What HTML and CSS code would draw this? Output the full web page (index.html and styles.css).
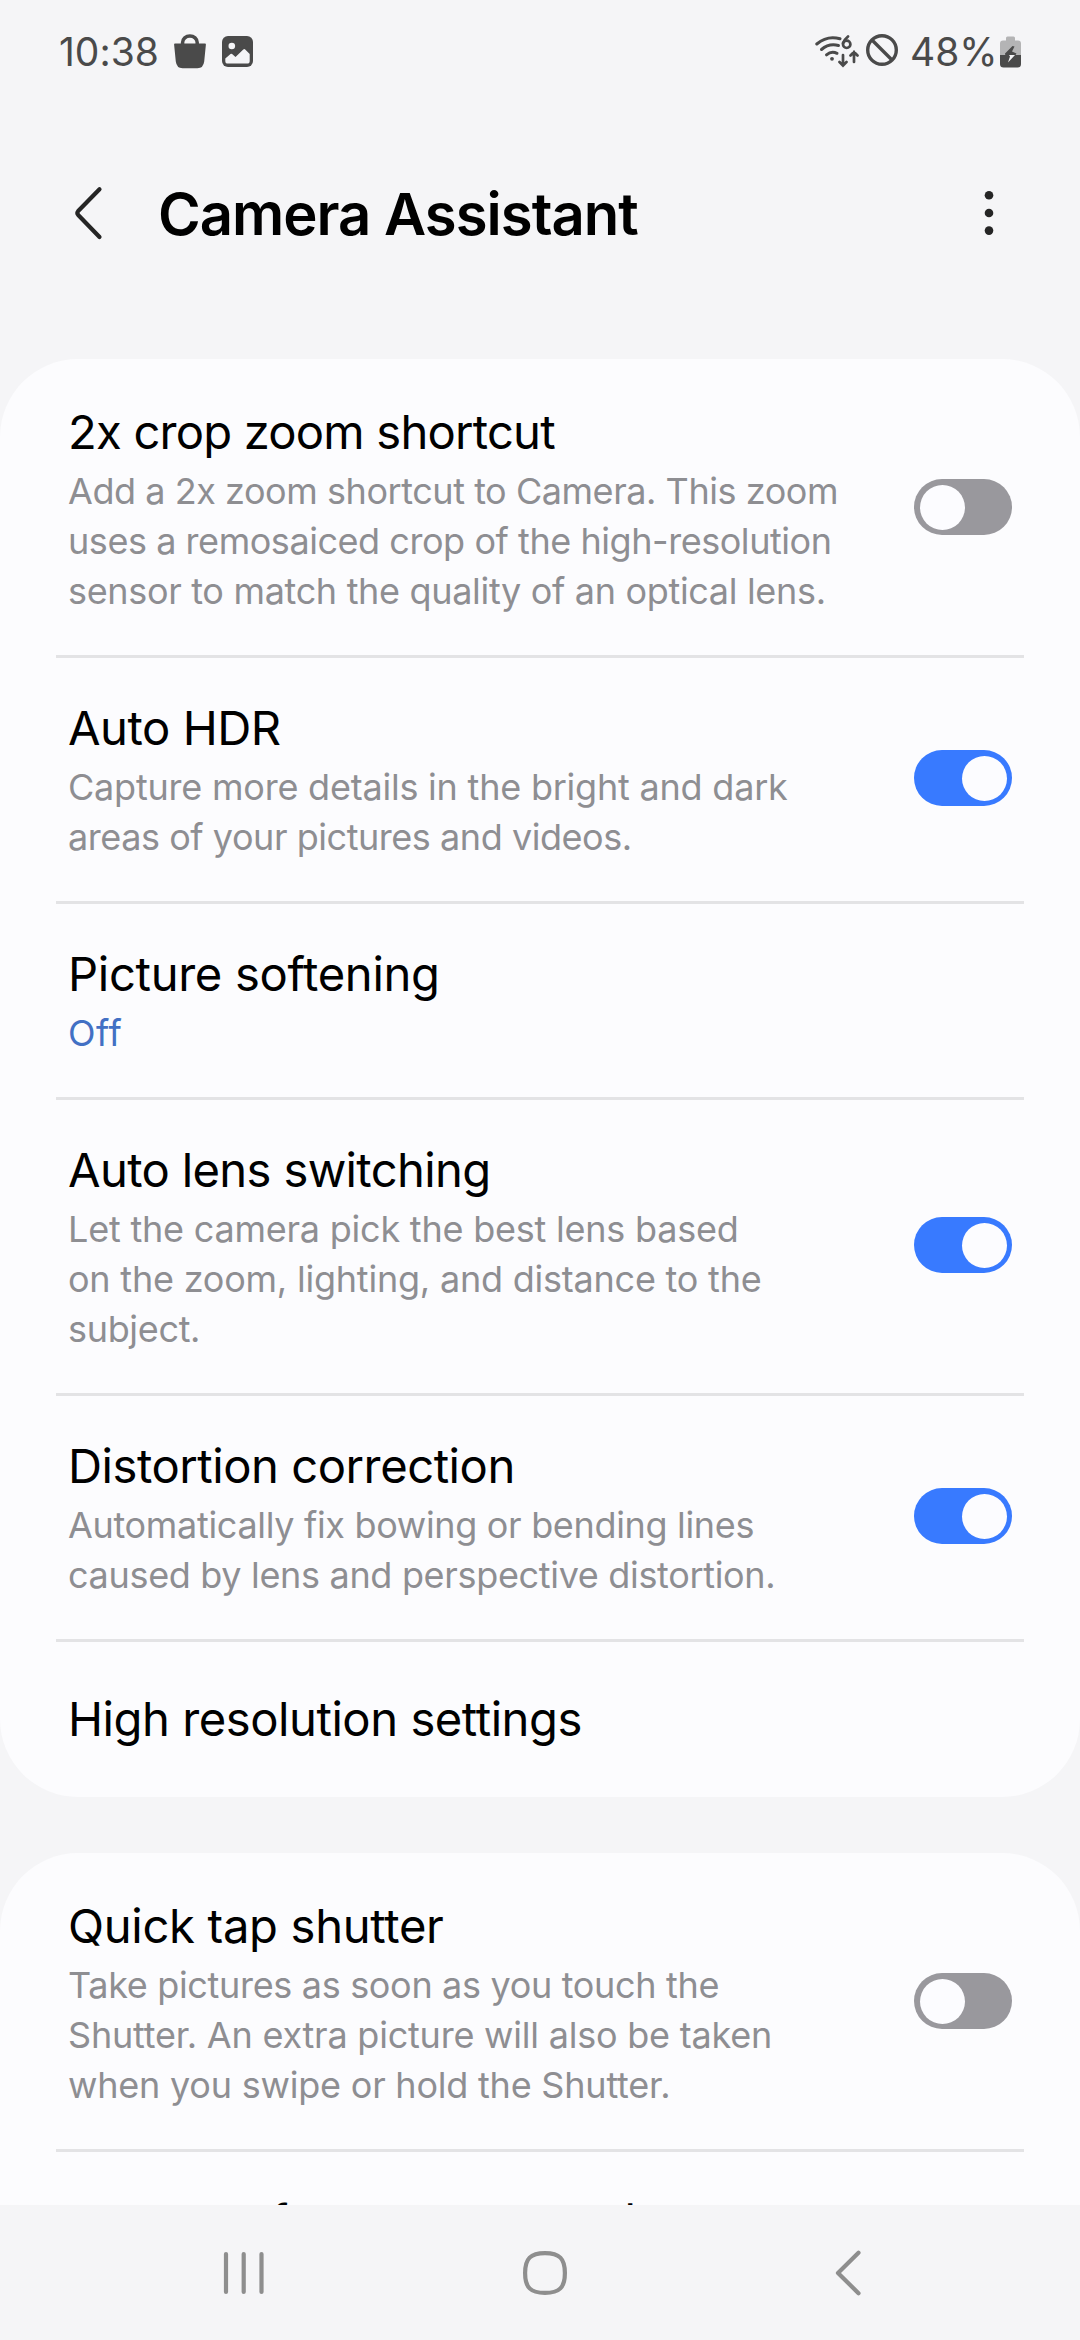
FILE: index.html
```html
<!DOCTYPE html>
<html lang="en">
<head>
<meta charset="utf-8">
<title>Camera Assistant</title>
<link rel="stylesheet" href="styles.css">
</head>
<body>
<div class="screen">
  <div class="status">
    <span class="status-text clock">10:38</span>
    <svg class="bag" width="34" height="36" viewBox="0 0 34 36">
      <path d="M2 9.500H32Q33 9.500 32.900 10.500L31.200 27.500Q30.300 34.300 24.500 34.300H9.500Q3.700 34.300 2.800 27.500L1.100 10.500Q1 9.500 2 9.500Z" fill="#4a4a4a"/>
      <path d="M9.600 11V8.500A7.300 6.600 0 0 1 24.200 8.500V11" fill="none" stroke="#4a4a4a" stroke-width="3.500"/>
    </svg>
    <svg class="gallery" width="31" height="31" viewBox="0 0 31 31">
      <rect width="31" height="31" rx="6" fill="#4a4a4a"/>
      <circle cx="9.800" cy="10" r="3.300" fill="#f5f5f7"/>
      <path d="M3.300 22.500L8.500 18Q9.300 17.400 10.100 18L13.500 21L21.300 13.400Q22.300 12.600 23.200 13.400L27.700 18V25Q27.700 27.600 25 27.600H6Q3.300 27.600 3.300 25Z" fill="#f5f5f7"/>
    </svg>
    <span class="spacer"></span>
    <svg class="wifi" width="44" height="34" viewBox="0 0 44 34" fill="none" stroke="#4a4a4a" stroke-linecap="round">
      <g stroke-width="3">
        <path d="M1.800 9Q12.500 0 25 3.800"/>
        <path d="M6.500 14.500Q14 8 23.500 10.500"/>
        <path d="M11.500 19.800Q16.500 15.500 22 18.300"/>
      </g>
      <circle cx="17" cy="23.800" r="1.900" fill="#4a4a4a" stroke="none"/>
      <path d="M33 1.500Q29.500 4.500 28 8" stroke-width="2.700"/>
      <circle cx="31.700" cy="9.300" r="3.700" stroke-width="2.700"/>
      <path d="M28 20V30M24.500 27L28 30.500L31.500 27M39 27V17M35.500 20.500L39 17L42.500 20.500" stroke-width="2.700"/>
    </svg>
    <svg class="ban" width="34" height="34" viewBox="0 0 34 34" fill="none" stroke="#4a4a4a" stroke-width="3.400">
      <circle cx="17" cy="17" r="14.300"/>
      <path d="M7 7L27 27"/>
    </svg>
    <span class="status-text percent">48%</span>
    <svg class="battery" width="21" height="32" viewBox="0 0 21 32">
      <path d="M6 4.500V2Q6 .5 7.500 .5H13.500Q15 .5 15 2V4.500H18Q21 4.500 21 7.500V19.500H0V7.500Q0 4.500 3 4.500Z" fill="#b4b4b5"/>
      <path d="M0 19H21V28Q21 31.500 17.500 31.500H3.500Q0 31.500 0 28Z" fill="#4a4a4a"/>
      <path d="M12.500 10L5 17.500Q4.700 19 6 19H15.500L16.500 17.500L12 15.500L14.500 10.500Z" fill="#4a4a4a"/>
      <path d="M9 19H15L8 26.500L10 20.500Z" fill="#f5f5f7"/>
    </svg>
  </div>

  <header class="header">
    <svg class="back" width="36" height="60" viewBox="0 0 36 60" fill="none" stroke="#252525" stroke-width="4.200" stroke-linecap="round" stroke-linejoin="round">
      <path d="M29.500 6.200L8.200 28Q6.500 30 8.200 32L29.500 54"/>
    </svg>
    <h1 class="heading">Camera Assistant</h1>
    <svg class="more" width="12" height="60" viewBox="0 0 12 60" fill="#252525">
      <circle cx="6" cy="12.300" r="4.300"/><circle cx="6" cy="30" r="4.300"/><circle cx="6" cy="47.600" r="4.300"/>
    </svg>
  </header>

  <main class="list">
    <section class="card">
      <div class="row">
        <div class="copy">
          <h2 class="title tight">2x crop zoom shortcut</h2>
          <p class="summary"><span class="snug">Add a 2x zoom shortcut to Camera. This zoom<br>uses a remosaiced crop of the high-resolution</span><br>sensor to match the quality of an optical lens.</p>
        </div>
        <span class="toggle"><span class="knob"></span></span>
      </div>
      <div class="row">
        <div class="copy">
          <h2 class="title">Auto HDR</h2>
          <p class="summary"><span class="loose">Capture more details in the bright and dark</span><br><span class="snug">areas of your pictures and videos.</span></p>
        </div>
        <span class="toggle on"><span class="knob"></span></span>
      </div>
      <div class="row">
        <div class="copy">
          <h2 class="title wide">Picture softening</h2>
          <p class="summary value">Off</p>
        </div>
      </div>
      <div class="row">
        <div class="copy">
          <h2 class="title narrow">Auto lens switching</h2>
          <p class="summary"><span class="loose">Let the camera pick the best lens based<br>on the zoom, lighting, and distance to the</span><br>subject.</p>
        </div>
        <span class="toggle on"><span class="knob"></span></span>
      </div>
      <div class="row">
        <div class="copy">
          <h2 class="title">Distortion correction</h2>
          <p class="summary">Automatically fix bowing or bending lines<br>caused by lens and perspective distortion.</p>
        </div>
        <span class="toggle on"><span class="knob"></span></span>
      </div>
      <div class="row single">
        <h2 class="title">High resolution settings</h2>
      </div>
    </section>

    <section class="card">
      <div class="row">
        <div class="copy">
          <h2 class="title wide">Quick tap shutter</h2>
          <p class="summary">Take pictures as soon as you touch the<br><span class="loose">Shutter. An extra picture will also be taken<br>when you swipe or hold the Shutter.</span></p>
        </div>
        <span class="toggle"><span class="knob"></span></span>
      </div>
      <div class="row">
        <h2 class="title peek">Prioritize focus over speed</h2>
      </div>
    </section>
  </main>

  <nav class="nav">
    <svg width="48" height="48" viewBox="0 0 48 48" fill="none" stroke="#8e8e8e" stroke-width="4.200" stroke-linecap="round">
      <path d="M6 5V43M23.700 5V43M41.500 5V43"/>
    </svg>
    <svg width="48" height="48" viewBox="0 0 48 48" fill="none" stroke="#8e8e8e" stroke-width="4.200">
      <path d="M24 4.100C38.500 4.100 43.900 9.500 43.900 24S38.500 43.900 24 43.900S4.100 38.500 4.100 24S9.500 4.100 24 4.100Z"/>
    </svg>
    <svg width="48" height="48" viewBox="0 0 48 48" fill="none" stroke="#8e8e8e" stroke-width="4.200" stroke-linecap="round" stroke-linejoin="round">
      <path d="M35.500 3.800L15 24L35.500 44.200"/>
    </svg>
  </nav>
</div>
</body>
</html>
```
FILE: styles.css
```css
* {
  box-sizing: border-box;
  margin: 0;
  padding: 0;
}

body {
  background: #f5f5f7;
  font-family: Inter, "Liberation Sans", sans-serif;
  font-variant-ligatures: no-contextual;
}

svg {
  display: block;
  flex: none;
}

.screen {
  width: 1080px;
  height: 2340px;
  display: flex;
  flex-direction: column;
  overflow: hidden;
}

.status {
  flex: none;
  height: 103px;
  padding: 0 59px 0 59px;
  display: flex;
  align-items: center;
}

.status-text {
  color: #4a4a4a;
  font-size: 39px;
  font-weight: 370;
  line-height: 48px;
  white-space: nowrap;
}

.clock {
  width: 114px;
}

.gallery {
  margin-left: 15px;
}

.spacer {
  flex: 1;
}

.wifi {
  margin-right: 6px;
}

.ban {
  margin-right: 11px;
  margin-bottom: 4px;
}

.percent {
  width: 90px;
}

.header {
  flex: none;
  height: 256px;
  padding: 0 85px 36px 70px;
  display: flex;
  align-items: center;
}

.heading {
  flex: 1;
  padding-left: 52px;
  padding-top: 1px;
  font-size: 58px;
  font-weight: 600;
  line-height: 70px;
  letter-spacing: -0.017em;
  color: #000;
}

.list {
  flex: 1;
  min-height: 0;
  overflow: hidden;
  display: flex;
  flex-direction: column;
  gap: 56px;
}

.card {
  flex: none;
  padding: 0 56px;
  border-radius: 78px;
  background: #fcfcfe;
}

.row {
  display: flex;
  align-items: center;
  justify-content: space-between;
  padding: 43px 12px 39px;
}

.row + .row {
  box-shadow: inset 0 3px 0 #e3e3e5;
}

.row.single {
  padding: 50px 12px 48px;
}

.title {
  font-size: 47.2px;
  font-weight: 400;
  line-height: 60px;
  letter-spacing: -0.01em;
  color: #000;
  white-space: nowrap;
}

.title.tight {
  letter-spacing: -0.017em;
}

.title.narrow {
  letter-spacing: -0.014em;
}

.title.wide {
  letter-spacing: -0.007em;
}

.title.peek {
  font-family: Roboto, Inter, sans-serif;
  font-size: 46.8px;
  letter-spacing: 0.012em;
}

.summary {
  margin-top: 4px;
  font-size: 36px;
  line-height: 50px;
  letter-spacing: -0.009em;
  color: #8e8e92;
  white-space: nowrap;
}

.snug {
  letter-spacing: -0.0125em;
}

.loose {
  letter-spacing: -0.006em;
}

.summary.value {
  color: #4270c4;
  letter-spacing: 0.015em;
}

.toggle {
  flex: none;
  width: 98px;
  height: 56px;
  margin-bottom: 4px;
  padding: 5.5px;
  border-radius: 28px;
  background: #99989d;
  display: flex;
}

.toggle.on {
  background: #387aff;
  justify-content: flex-end;
}

.knob {
  width: 45px;
  height: 45px;
  border-radius: 50%;
  background: #fcfcff;
}

.nav {
  flex: none;
  height: 135px;
  padding-left: 10px;
  background: #f5f5f7;
  display: flex;
  align-items: center;
  justify-content: center;
  gap: 253.500px;
}
```
